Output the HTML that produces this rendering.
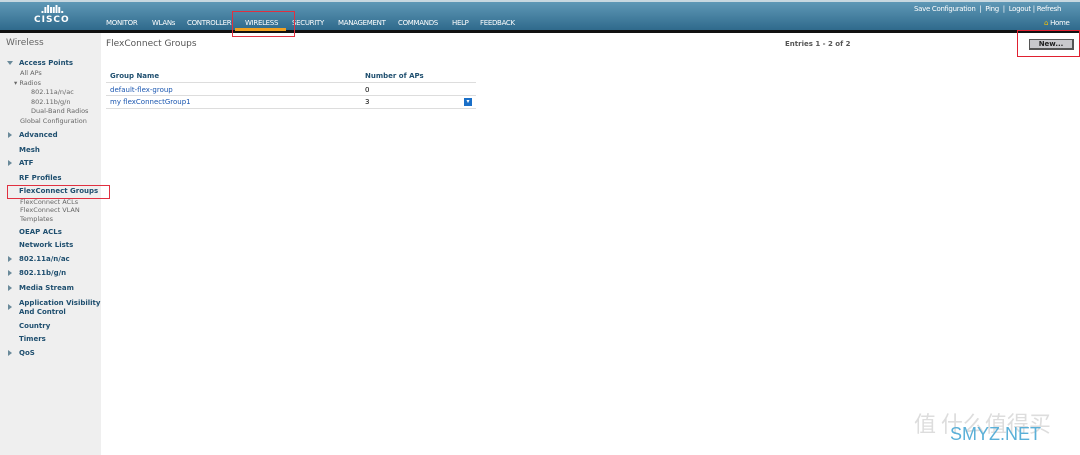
<!DOCTYPE html>
<html><head><meta charset="utf-8"><style>
*{margin:0;padding:0;box-sizing:border-box}
body{width:1080px;height:455px;overflow:hidden;background:#fff;font-family:"DejaVu Sans","Liberation Sans",sans-serif;font-size:7px;position:relative}
.hdr{position:absolute;left:0;top:0;width:1080px;height:30px;background:linear-gradient(#5f98b6,#2f6a8c);border-top:2px solid #c8d8e0}
.bar{position:absolute;left:0;top:30px;width:1080px;height:3px;background:#111}
.logo{position:absolute;left:34px;top:5px;color:#fff;font-weight:bold;font-size:9px;letter-spacing:1px;text-align:center}
.nav{position:absolute;top:19px;color:#fff;font-size:7px;letter-spacing:-0.3px}
.s{position:absolute;color:#1f4f6f;font-weight:bold;font-size:7px;left:19px}
.g{position:absolute;color:#666;font-size:6.5px}
.tri{position:absolute;left:8px;width:0;height:0;border-top:3px solid transparent;border-bottom:3px solid transparent;border-left:4px solid #6a8a9a}
.red{position:absolute;border:1px solid #e03040}
a{color:#1a56b0}
</style></head><body>
<div class="hdr"></div><div class="bar"></div>
<div class="logo"><div style="font-size:11px;letter-spacing:-1px;font-weight:bold;line-height:10px">.ılıılı.</div>CISCO</div>
<div class="nav" style="left:106px">MONITOR</div>
<div class="nav" style="left:152px">WLANs</div>
<div class="nav" style="left:187px">CONTROLLER</div>
<div class="nav" style="left:245px">WIRELESS</div>
<div class="nav" style="left:292px">SECURITY</div>
<div class="nav" style="left:338px">MANAGEMENT</div>
<div class="nav" style="left:398px">COMMANDS</div>
<div class="nav" style="left:452px">HELP</div>
<div class="nav" style="left:480px">FEEDBACK</div>
<div style="position:absolute;left:235px;top:28px;width:51px;height:3px;background:#f0a020"></div>
<div class="red" style="left:232px;top:11px;width:63px;height:26px"></div>
<div class="nav" style="left:914px;top:5px">Save Configuration &nbsp;| &nbsp;Ping &nbsp;| &nbsp;Logout | Refresh</div>
<div class="nav" style="left:1044px;top:19px"><span style="color:#f5c000">⌂</span> Home</div>
<div style="position:absolute;left:0;top:33px;width:101px;height:422px;background:#efefef"></div>
<div style="position:absolute;left:6px;top:38px;font-size:9px;color:#666">Wireless</div>
<div class="tri" style="left:7px;top:61px;border:3px solid transparent;border-top:4px solid #6a8a9a;border-bottom:0"></div>
<div class="s" style="top:59px">Access Points</div>
<div class="g" style="left:20px;top:69px">All APs</div>
<div class="g" style="left:14px;top:79px">▾ Radios</div>
<div class="g" style="left:31px;top:88px">802.11a/n/ac</div>
<div class="g" style="left:31px;top:98px">802.11b/g/n</div>
<div class="g" style="left:31px;top:107px">Dual-Band Radios</div>
<div class="g" style="left:20px;top:117px">Global Configuration</div>
<div class="tri" style="top:132px"></div><div class="s" style="top:131px">Advanced</div>
<div class="s" style="top:146px">Mesh</div>
<div class="tri" style="top:160px"></div><div class="s" style="top:159px">ATF</div>
<div class="s" style="top:174px">RF Profiles</div>
<div class="s" style="top:187px">FlexConnect Groups</div>
<div class="red" style="left:7px;top:185px;width:103px;height:14px"></div>
<div class="g" style="left:20px;top:198px">FlexConnect ACLs</div>
<div class="g" style="left:20px;top:206px">FlexConnect VLAN</div>
<div class="g" style="left:20px;top:215px">Templates</div>
<div class="s" style="top:228px">OEAP ACLs</div>
<div class="s" style="top:241px">Network Lists</div>
<div class="tri" style="top:256px"></div><div class="s" style="top:255px">802.11a/n/ac</div>
<div class="tri" style="top:270px"></div><div class="s" style="top:269px">802.11b/g/n</div>
<div class="tri" style="top:285px"></div><div class="s" style="top:284px">Media Stream</div>
<div class="tri" style="top:304px"></div><div class="s" style="top:299px;line-height:8.5px">Application Visibility<br>And Control</div>
<div class="s" style="top:322px">Country</div>
<div class="s" style="top:335px">Timers</div>
<div class="tri" style="top:350px"></div><div class="s" style="top:349px">QoS</div>
<div style="position:absolute;left:106px;top:39px;font-size:9px;color:#555">FlexConnect Groups</div>
<div style="position:absolute;left:785px;top:40px;font-size:7px;color:#555;font-weight:bold">Entries 1 - 2 of 2</div>
<div style="position:absolute;left:1029px;top:39px;width:45px;height:11px;background:#c8c8cc;border:1px solid #555;border-right-width:2px;border-bottom-width:2px;font-size:7px;font-weight:bold;text-align:center;line-height:9px;color:#222">New...</div>
<div class="red" style="left:1017px;top:30px;width:63px;height:27px;border-color:#e02030"></div>
<div style="position:absolute;left:110px;top:72px;font-size:7px;font-weight:bold;color:#1f4f6f">Group Name</div>
<div style="position:absolute;left:365px;top:72px;font-size:7px;font-weight:bold;color:#1f4f6f">Number of APs</div>
<div style="position:absolute;left:106px;top:82px;width:370px;border-top:1px solid #ddd"></div>
<div style="position:absolute;left:110px;top:86px;font-size:7px"><a>default-flex-group</a></div>
<div style="position:absolute;left:365px;top:86px;font-size:7px">0</div>
<div style="position:absolute;left:106px;top:95px;width:370px;border-top:1px solid #ddd"></div>
<div style="position:absolute;left:110px;top:98px;font-size:7px"><a>my flexConnectGroup1</a></div>
<div style="position:absolute;left:365px;top:98px;font-size:7px">3</div>
<div style="position:absolute;left:464px;top:98px;width:8px;height:8px;background:#1a6fc8;color:#fff;font-size:6px;text-align:center;line-height:7px">▾</div>
<div style="position:absolute;left:106px;top:108px;width:370px;border-top:1px solid #ddd"></div>
<div style="position:absolute;left:914px;top:407px;font-size:22px;color:#ddd;font-family:'Noto Sans CJK SC',sans-serif">值 什么值得买</div>
<div style="position:absolute;left:950px;top:424px;font-size:18px;color:#5ab0d8;font-family:'Liberation Sans',sans-serif">SMYZ.NET</div>
</body></html>
